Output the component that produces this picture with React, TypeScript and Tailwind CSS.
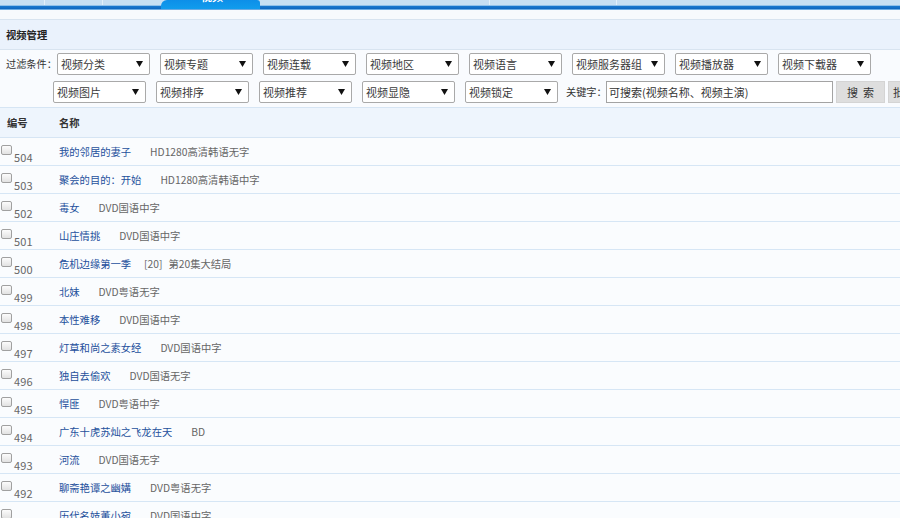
import React from "react";

const rows: { id: number; name: string; desc: React.ReactNode }[] = [
  { id: 504, name: "我的邻居的妻子", desc: "HD1280高清韩语无字" },
  { id: 503, name: "聚会的目的：开始", desc: "HD1280高清韩语中字" },
  { id: 502, name: "毒女", desc: "DVD国语中字" },
  { id: 501, name: "山庄情挑", desc: "DVD国语中字" },
  { id: 500, name: "危机边缘第一季", desc: "" },
  { id: 499, name: "北妹", desc: "DVD粤语无字" },
  { id: 498, name: "本性难移", desc: "DVD国语中字" },
  { id: 497, name: "灯草和尚之素女经", desc: "DVD国语中字" },
  { id: 496, name: "独自去偷欢", desc: "DVD国语无字" },
  { id: 495, name: "悍匪", desc: "DVD粤语中字" },
  { id: 494, name: "广东十虎苏灿之飞龙在天", desc: "BD" },
  { id: 493, name: "河流", desc: "DVD国语无字" },
  { id: 492, name: "聊斋艳谭之幽媾", desc: "DVD粤语无字" },
  { id: 491, name: "历代名妓董小宛", desc: "DVD国语中字" },
];

const row1 = ["视频分类", "视频专题", "视频连载", "视频地区", "视频语言", "视频服务器组", "视频播放器", "视频下载器"];
const row2 = ["视频图片", "视频排序", "视频推荐", "视频显隐", "视频锁定"];

function Sel({ label }: { label: string }) {
  return (
    <div className="w-[93px] h-[22px] shrink-0 border border-[#a9a9a9] rounded-[2px] bg-white flex items-center justify-between pl-[3px] pr-[6px] text-[11px] text-[#3a3a3a] leading-none">
      <span>{label}</span>
      <svg width="7" height="6" viewBox="0 0 7 6">
        <path d="M0 0 L7 0 L3.5 6 Z" fill="#111" />
      </svg>
    </div>
  );
}

export default function App() {
  return (
    <div className="w-[900px] h-[518px] overflow-hidden bg-white font-['Noto_Sans_CJK_SC','Microsoft_YaHei',sans-serif] relative">
      {/* top nav strip */}
      <div className="h-[5px] bg-[#c7dff3] flex">
        <div className="w-[45px] border-r border-[#e4f0fa]" />
        <div className="w-[58px] border-r border-[#e4f0fa]" />
        <div className="w-[387px] border-r border-[#e4f0fa]" />
        <div className="w-[127px] border-r border-[#e4f0fa]" />
      </div>
      <div className="h-[1px] bg-[#8fc0ea]" />
      <div className="h-[3px] bg-gradient-to-b from-[#1a79cf] to-[#0f66bf]" />
      <div className="h-[1px] bg-[#6aaae3]" />
      <div className="h-[9px] bg-[#f7fafd]" />
      {/* tab overlay */}
      <div className="absolute left-[161px] top-0 w-[99px] h-[9px] rounded-tl-[6px] rounded-tr-[3px] bg-gradient-to-b from-[#0d8fe8] to-[#119ced] overflow-hidden">
        <div className="absolute left-[40px] top-[-10px] text-[11px] font-bold text-white leading-[12px]">视频</div>
      </div>

      {/* section title */}
      <div className="h-[31px] border-t border-b border-[#d8e4f0] bg-[#eaf2fc] flex items-center pl-[6px] text-[10.3px] font-bold text-[#222]">
        视频管理
      </div>

      {/* filters */}
      <div className="h-[58px] bg-[#f9fbfe] border-b border-[#d6e5f4] pt-[3px]">
        <div className="flex items-center pl-[6px]">
          <span className="w-[51px] text-[10.2px] text-[#333] shrink-0">过滤条件：</span>
          <div className="flex gap-[10px]">
            {row1.map((l) => (
              <Sel key={l} label={l} />
            ))}
          </div>
        </div>
        <div className="flex items-center pl-[53px] mt-[6px] whitespace-nowrap">
          <div className="flex gap-[10px]">
            {row2.map((l) => (
              <Sel key={l} label={l} />
            ))}
          </div>
          <span className="ml-[8px] w-[40px] shrink-0 text-[10.2px] text-[#333]">关键字：</span>
          <div className="w-[227px] h-[22px] shrink-0 border border-[#a3a3a3] bg-white flex items-center pl-[2px] text-[11px] text-[#333]">
            可搜索(视频名称、视频主演)
          </div>
          <div className="ml-[3px] w-[49px] h-[22px] shrink-0 bg-[#dedede] border border-[#d4d4d4] flex items-center justify-center text-[11px] text-[#333]">
            搜&nbsp;&nbsp;索
          </div>
          <div className="ml-[3px] w-[60px] h-[22px] shrink-0 bg-[#dedede] border border-[#d4d4d4] flex items-center pl-[4px] text-[11px] text-[#333]">
            批量
          </div>
        </div>
      </div>

      {/* table header */}
      <div className="h-[30px] bg-[#eef5fd] border-b border-[#d6e5f4] flex items-center text-[10.3px] font-bold text-[#333]">
        <span className="w-[59px] pl-[7px]">编号</span>
        <span>名称</span>
      </div>

      {/* rows */}
      {rows.map((r) => (
        <div key={r.id} className="h-[28px] bg-[#fafcfe] border-b border-[#d6e6f5] flex items-center text-[10.3px] whitespace-nowrap">
          <div className="w-[59px] flex items-center shrink-0">
            <span className="ml-[1px] w-[11px] h-[10px] rounded-[2px] border border-[#a0a0a0] bg-gradient-to-b from-[#fcfcfc] to-[#e2e2e2] mt-[-3px]" />
            <span className="ml-[2px] mt-[11px] text-[11px] tracking-[0.2px] text-[#666] leading-none">{r.id}</span>
          </div>
          <span className="text-[#24509c]">{r.name}</span>
          {r.id === 500 ? (
            <>
              <span className="ml-[13px] text-[#666]">[20]</span>
              <span className="ml-[6px] text-[#666]">第20集大结局</span>
            </>
          ) : (
            <span className="ml-[19px] text-[#666]">{r.desc}</span>
          )}
        </div>
      ))}
    </div>
  );
}
